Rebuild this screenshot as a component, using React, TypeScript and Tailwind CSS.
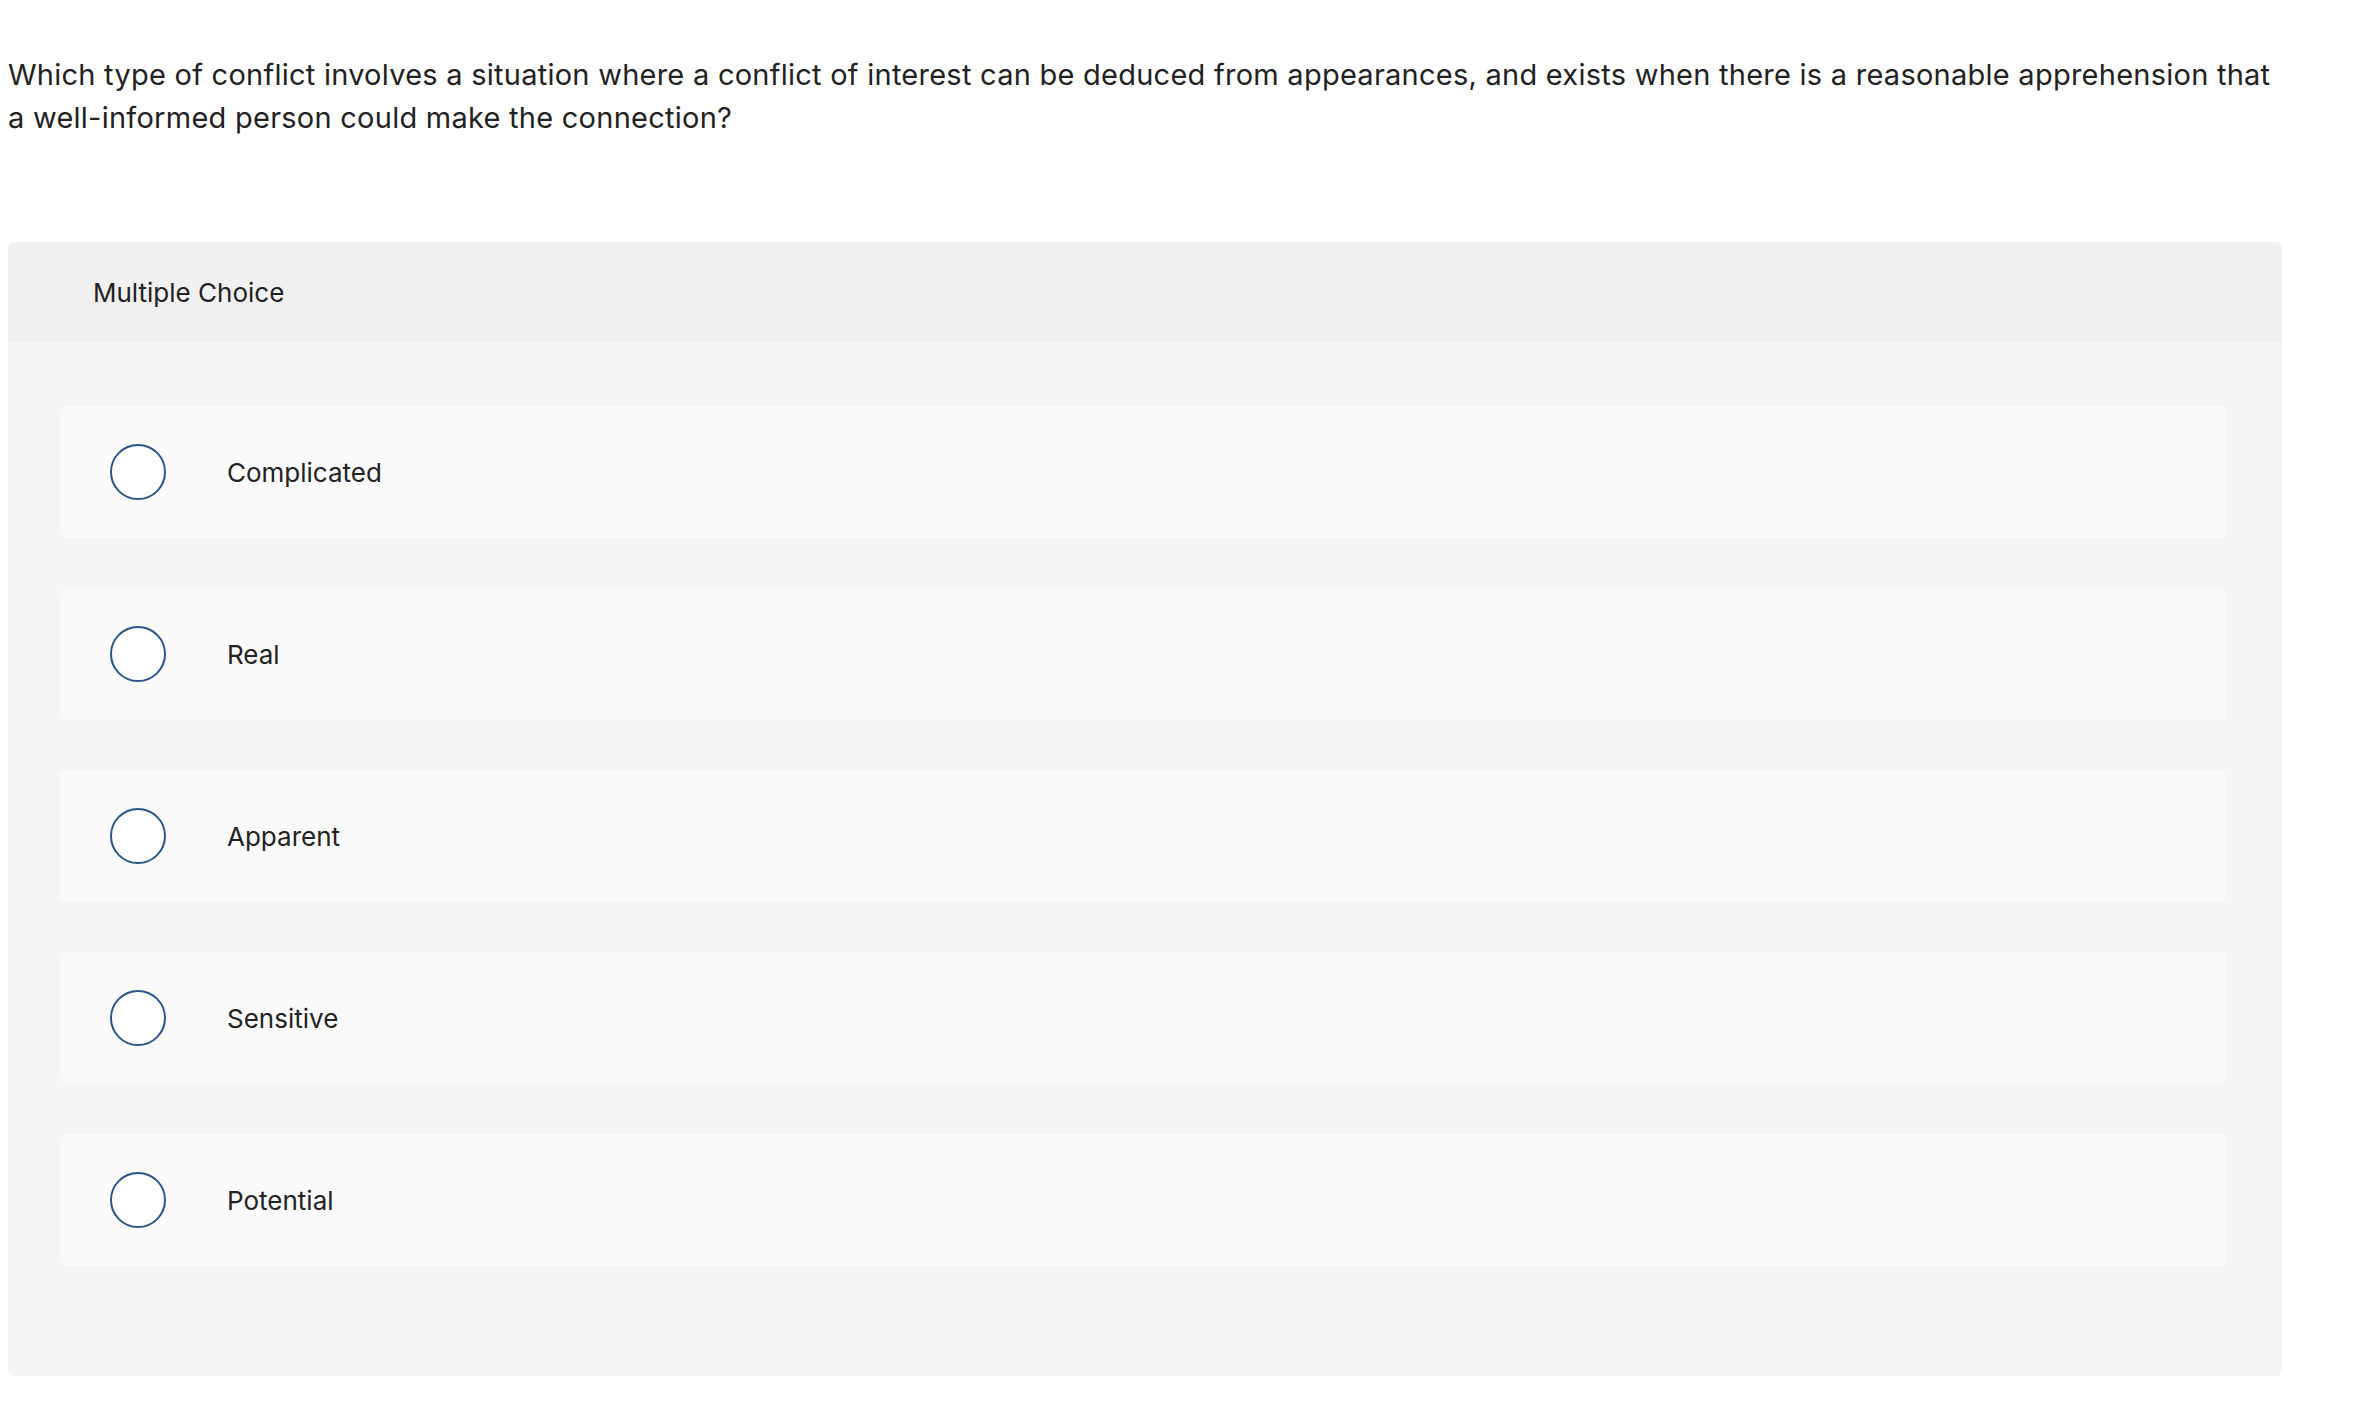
const options = ["Complicated", "Real", "Apparent", "Sensitive", "Potential"];

export default function App() {
  return (
    <div className="min-h-screen w-full bg-white font-['Inter',sans-serif] text-[#222222]">
      <div className="pl-[8px] pr-[30px] pt-[53px]">
        <p className="text-[29px] leading-[43px] tracking-[0.25px]">
          Which type of conflict involves a situation where a conflict of interest can be deduced from appearances, and exists when there is a reasonable apprehension that
          <br />
          a well-informed person could make the connection?
        </p>
      </div>

      <div className="ml-[8px] mt-[103px] w-[2274px] overflow-hidden rounded-[6px] bg-[#f5f5f5]">
        <div className="flex h-[100px] items-center bg-[#f0f0f0] pl-[85px] text-[26px]">
          Multiple Choice
        </div>
        <div className="flex flex-col gap-[50px] pb-[110px] pl-[52px] pr-[56px] pt-[64px]">
          {options.map((opt) => (
            <div
              key={opt}
              className="flex h-[132px] items-center rounded-[6px] bg-[#fafafa] pl-[50px]"
            >
              <span className="h-[56px] w-[56px] shrink-0 rounded-full border-2 border-[#2a5589] bg-white" />
              <span className="ml-[61px] text-[26px]">{opt}</span>
            </div>
          ))}
        </div>
      </div>
    </div>
  );
}
